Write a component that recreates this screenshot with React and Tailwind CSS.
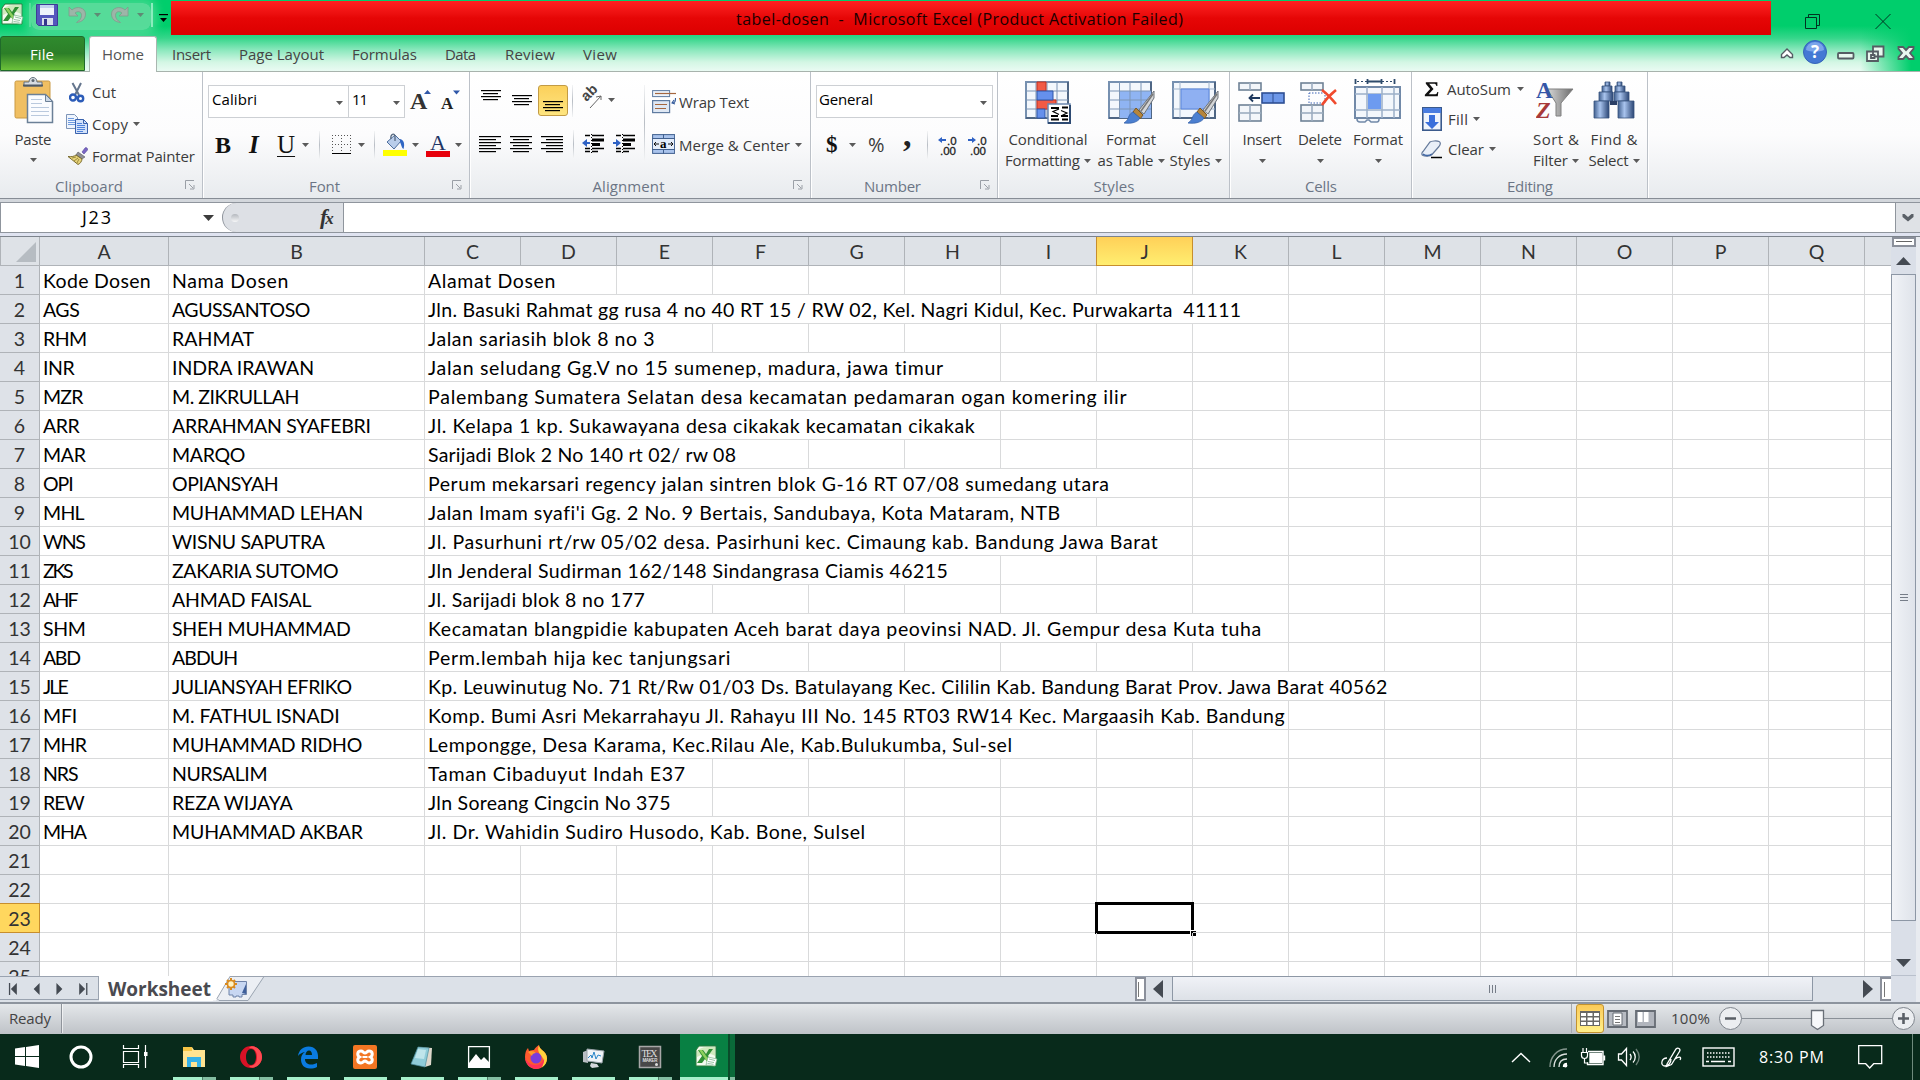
import React, { useLayoutEffect, useRef } from "react";

/* Single-line label whose tracking is adjusted so that it fills its width. */
function T({ w, children, className = "" }) {
  const ref = useRef(null);
  useLayoutEffect(() => {
    const el = ref.current;
    el.style.letterSpacing = "0px";
    const base = el.getBoundingClientRect().width;
    el.style.letterSpacing = (w - base) / Math.max(1, el.textContent.length - 1) + "px";
  }, [w, children]);
  return (
    <span className={"block shrink-0 whitespace-pre " + className} style={{ width: w }}>
      <span ref={ref}>{children}</span>
    </span>
  );
}

const Arrow = ({ className = "", fill = "#5a5a5a" }) => (
  <svg width="7" height="4" viewBox="0 0 7 4" className={"block shrink-0 " + className}>
    <path d="M0 0h7L3.5 4z" fill={fill} />
  </svg>
);

const Launcher = () => (
  <svg width="10" height="10" viewBox="0 0 10 10" className="block" fill="none" stroke="#9a9fa6">
    <path d="M.5 9V.5H9M4 4l4 4M9 5v4H5" />
  </svg>
);

const VSep = ({ className = "" }) => (
  <span className={"block w-px shrink-0 bg-linear-to-b from-[#f4f5f6] via-[#b9bec5] to-[#f4f5f6] " + className} />
);

function Group({ w, label, lw, launcher, children }) {
  return (
    <section className="flex h-[126px] shrink-0 border-r border-white" style={{ width: w }}>
      <div className="flex min-w-0 grow flex-col border-r border-[#bcc1c8]">
        <div className="h-[102px]">{children}</div>
        <div className="flex h-6 items-center text-[15px] text-[#6b7585]">
          <div className="flex grow justify-center pt-px">
            <T w={lw}>{label}</T>
          </div>
          {launcher && (
            <div className="w-[24px] shrink-0 pb-[2px] pl-[7px]">
              <Launcher />
            </div>
          )}
        </div>
      </div>
    </section>
  );
}

/* ---------- icons ---------- */

const ExcelIcon = () => (
  <svg width="23" height="23" viewBox="0 0 23 23" className="block shrink-0">
    <path d="M4 1h17v20H1V5z" fill="#f4faf0" stroke="#2b7a3b" />
    <path d="M2 6c5-5 10-4 18-4v9C14 7 8 9 2 12z" fill="#cfe9bd" />
    <path d="M3 5h5l3 4 3-5h4l-5 7 5 7h-5l-3-4-3 4H2l5-7z" fill="#2f8f35" />
    <path d="M4 5h3l9 13h-3z" fill="#8fd05e" />
    <path d="M13 12l9 2-2 7-9-1z" fill="#fff" stroke="#7bb389" strokeWidth=".7" />
    <path d="M14 14l6 1.500M13 16.500l6 1M12.500 18.500l6 .8" stroke="#7bb389" strokeWidth=".8" />
  </svg>
);

const SaveIcon = () => (
  <svg width="22" height="22" viewBox="0 0 22 22" className="block shrink-0">
    <path d="M.5 .5h21v21h-19l-2-2z" fill="#5557bd" stroke="#3c3c96" />
    <path d="M4 1h14v10H4z" fill="#eef2fb" />
    <path d="M4 1h14v3H4z" fill="#c3d2f0" />
    <path d="M6 14h11v7H6z" fill="#d9dfec" />
    <path d="M8 15h3v6H8z" fill="#35358c" />
  </svg>
);

const Undo = ({ flip = false }) => (
  <svg width="18" height="18" viewBox="0 0 18 18" className={"block shrink-0 " + (flip ? "-scale-x-100" : "")}>
    <path d="M1 1v9h9L7 7c3-2.500 6.500-1.500 6.500 2.500 0 3-2 5-5 7 5.500-.5 9-3.500 9-8.500C17.500 1.500 8.500-.5 4 4z" fill="#9db5a8" stroke="#7f9c8c" strokeWidth=".8" />
  </svg>
);

const PasteIcon = () => (
  <svg width="40" height="47" viewBox="0 0 40 47" className="block">
    <rect x="1" y="4" width="35" height="37" rx="1.500" fill="#f0bf62" stroke="#c99a45" />
    <path d="M10 9V5h5c0-6 8-6 8 0h5v4z" fill="#d7dce2" stroke="#66737f" />
    <path d="M9 8.500h20" stroke="#4e5a66" strokeWidth="2" />
    <circle cx="19" cy="3.500" r="1.500" fill="#5b6772" />
    <path d="M13.500 17.500h18l7 7v21h-25z" fill="#fafcff" stroke="#6b8097" strokeWidth="1.500" />
    <path d="M31.500 17.500v7h7z" fill="#ccd8e6" stroke="#6b8097" />
    <path d="M17 22.500h11M17 26.500h11M17 30.500h18M17 34.500h18M17 38.500h18" stroke="#b9c9de" />
  </svg>
);

const CutIcon = () => (
  <svg width="16" height="21" viewBox="0 0 16 21" className="block">
    <path d="M3.500 1l6.500 12M12 1L6 13" stroke="#64758d" strokeWidth="2" />
    <circle cx="4" cy="15.500" r="3" fill="none" stroke="#2c5cb8" strokeWidth="2.400" />
    <circle cx="11.500" cy="16.500" r="2.700" fill="none" stroke="#2c5cb8" strokeWidth="2.400" />
  </svg>
);

const CopyIcon = () => (
  <svg width="22" height="20" viewBox="0 0 22 20" className="block">
    <path d="M.5 .5h8l3 3v11H.5z" fill="#eef4fd" stroke="#7e95b8" />
    <path d="M2 4.500h6M2 6.500h7M2 8.500h7M2 10.500h7" stroke="#6e9ade" />
    <path d="M9.500 5.500h8l4 4v10h-12z" fill="#d3e2fa" stroke="#3a62ad" />
    <path d="M17.500 5.500v4h4" fill="none" stroke="#3a62ad" />
    <path d="M11 9.500h5M11 11.500h8M11 13.500h8M11 15.500h8M11 17.500h6" stroke="#4f82da" />
  </svg>
);

const BrushIcon = () => (
  <svg width="21" height="18" viewBox="0 0 21 18" className="block">
    <path d="M15 5l3-4c1-1 3 0 2.500 2L17 7z" fill="#7a65c4" stroke="#54469b" strokeWidth=".6" />
    <path d="M11 5l7 5-3 2-6-4z" fill="#8e8e93" stroke="#55555c" strokeWidth=".6" />
    <path d="M9 8l6 4c0 2-2 5-4 5.500L1 9.500C4 10 7 9.500 9 8z" fill="#e6d27a" stroke="#6f6121" strokeWidth=".9" />
    <path d="M5 11l4-1M7 14l4-3M10 16l2-4" stroke="#8a7a2c" strokeWidth=".8" />
  </svg>
);

const BordersIcon = () => (
  <svg width="19" height="20" viewBox="0 0 19 20" className="block">
    <path d="M0 .5h19M0 9.500h19M.5 0v18M9.500 0v18M18.500 0v18" stroke="#555" strokeDasharray="1 2" />
    <path d="M0 18.500h19" stroke="#000" />
  </svg>
);

const FillIcon = () => (
  <svg width="24" height="24" viewBox="0 0 24 24" className="block">
    <path d="M4 9l8-7 6 6-7 8z" fill="#b9cdea" stroke="#4d6e9e" />
    <path d="M8 6c-1-5 4-7 4-2v4" fill="none" stroke="#54677f" strokeWidth="1.300" />
    <path d="M17 6c4 1 5 5 3.500 10-2-1-2-4-3.500-7z" fill="#2f66c4" />
    <path d="M0 17h24v6H0z" fill="#ff0" />
  </svg>
);

const Lines = ({ h = 19, l, w = 22 }) => (
  <svg width={w} height={h} viewBox={`0 0 ${w} ${h}`} className="block shrink-0">
    {l.map(([x, len], i) => (
      <rect key={i} x={x} y={i * 3} width={len} height="1.200" fill="#000" />
    ))}
  </svg>
);

const AngleIcon = () => (
  <svg width="22" height="22" viewBox="0 0 22 22" className="block shrink-0 overflow-visible">
    <text x="0" y="0" transform="translate(5.500 15) rotate(-45)" fontFamily="Liberation Sans" fontSize="14.500" fontWeight="bold" fill="#444">
      ab
    </text>
    <path d="M9 21L20 9M20 9l-5 1M20 9v4" stroke="#666" fill="none" />
  </svg>
);

const IndentIcon = ({ right = false }) => (
  <svg width="22" height="20" viewBox="0 0 22 20" className="block shrink-0">
    <path d="M3 1.500h5M10 1.500h12M3 14.500h5M10 14.500h12M3 17.500h5M10 17.500h6" stroke="#000" strokeWidth="1.300" />
    <path d="M10 6h12M10 10.500h8" stroke="#000" strokeWidth="3" />
    <path d="M9.500 0v20" stroke="#000" strokeDasharray="1 2" />
    <path d={right ? "M8 9L3 5v3H0v2h3v3z" : "M0 9l5-4v3h3v2H5v3z"} fill="#2f62c4" />
  </svg>
);

const WrapIcon = () => (
  <svg width="24" height="24" viewBox="0 0 24 24" className="block shrink-0">
    <rect x=".6" y=".6" width="17" height="6" fill="#eef3fa" stroke="#5f7ba0" />
    <path d="M3 3.500h21" stroke="#a5673f" strokeWidth="1.200" />
    <rect x=".6" y="10.600" width="17" height="12" fill="#dfe8f4" stroke="#5f7ba0" strokeWidth="1.200" />
    <path d="M3 14.500h12M3 18.500h11" stroke="#a5673f" strokeWidth="1.200" />
    <path d="M23.500 8c0 4-1 5-3 5M22 10l-2 3 3 1" fill="none" stroke="#32599b" strokeWidth="1.100" />
  </svg>
);

const MergeIcon = () => (
  <svg width="23" height="20" viewBox="0 0 23 20" className="block shrink-0">
    <rect x=".6" y=".6" width="22" height="18.800" fill="#a9c3ec" stroke="#41608f" />
    <path d="M0 4.500h23M0 15.500h23M11.500 0v5M11.500 15v5" stroke="#41608f" />
    <rect x="1" y="5" width="21" height="10" fill="#e4edfa" />
    <path d="M2 10h5M21 10h-5M4 8l-2 2 2 2M19 8l2 2-2 2" stroke="#111" fill="none" />
    <text x="8" y="13.500" fontFamily="Liberation Serif" fontWeight="bold" fontSize="13">a</text>
  </svg>
);

const DecimalIcon = ({ right = false }) => (
  <svg width="20" height="21" viewBox="0 0 20 21" className="block shrink-0 overflow-visible">
    <path d={right ? "M8 5L4 2v2H0v2h4v2z" : "M0 5l4-3v2h4v2H4v2z"} fill="#2f62c4" />
    <text x="9" y="9.500" fontFamily="Liberation Sans" fontSize="11.500" fill="#222" stroke="#222" strokeWidth=".3">.0</text>
    <text x="2" y="19.500" fontFamily="Liberation Sans" fontSize="11.500" fill="#222" stroke="#222" strokeWidth=".3">.00</text>
  </svg>
);

const TableBase = () => (
  <>
    <rect x="1" y="1" width="42" height="36" fill="#f3f7fc" stroke="#7690b0" strokeWidth="2" />
    <path d="M1 37h42V1" fill="none" stroke="#4f6684" strokeWidth="2" />
  </>
);

const CondIcon = () => (
  <svg width="47" height="44" viewBox="0 0 47 44" className="block">
    <TableBase />
    <path d="M1 10h42M1 19h42M1 28h42M11 1v36M22 1v36M32 1v36" stroke="#7c95b5" />
    <path d="M12 1h9v9h-9zM12 19h19v9H12z" fill="#f25a45" stroke="#c03020" />
    <path d="M12 10h16v9H12zM12 28h8v9h-8z" fill="#6590ec" stroke="#2f56a8" />
    <rect x="23" y="23" width="22" height="19" fill="#fff" stroke="#6c88b0" strokeWidth="1.500" />
    <path d="M23 42h22V24" fill="none" stroke="#2d4a72" strokeWidth="2" />
    <path d="M26 27h8M26 35h7M26 38.500h8M37 26.500h6M36 35h7M37 38.500h6" stroke="#000" strokeWidth="1.800" />
    <path d="M34 28l-6 2.500 6 3M36 29.500l6 2.500-6 3" fill="none" stroke="#000" strokeWidth="1.200" />
  </svg>
);

const Brush = () => (
  <>
    <path d="M46 10v7L36 33l-5-4z" fill="#d4d6d8" stroke="#6e747b" />
    <path d="M45 13L33 30" stroke="#777" strokeWidth="1.500" />
    <path d="M28 27l7 7-3 4-7-7z" fill="#b5853c" stroke="#7b5720" />
    <path d="M25 31l7 6c-2 4-8 6-16 5 3-2 4-4 5-7 1-2 2-3 4-4z" fill="#4b7fd0" stroke="#2f5ca5" strokeWidth=".7" />
  </>
);

const FormatTableIcon = () => (
  <svg width="47" height="44" viewBox="0 0 47 44" className="block">
    <TableBase />
    <path d="M12 10h31v27H12z" fill="#8fb4f3" />
    <path d="M1 10h42M1 19h42M1 28h42M11.500 1v36M22 1v36M33 1v36" stroke="#7c95b5" />
    <Brush />
  </svg>
);

const CellStylesIcon = () => (
  <svg width="47" height="44" viewBox="0 0 47 44" className="block">
    <TableBase />
    <path d="M1 8h42M1 28h42M8 1v36M37 1v36" stroke="#9fb3cb" />
    <path d="M9 8h28v20H9z" fill="#8fb0f2" stroke="#5a86dc" />
    <Brush />
  </svg>
);

const RowBlock = ({ y, h }) => (
  <g fill="#f3f6fa" stroke="#6f8296" strokeWidth="1.600">
    <rect x="1" y={y} width="22" height={h} />
    <path d={`M12 ${y}v${h}`} stroke="#9cadc0" />
    {h > 10 && <path d={`M1 ${y + 8}h22`} stroke="#9cadc0" />}
  </g>
);

const InsertIcon = () => (
  <svg width="48" height="44" viewBox="0 0 48 44" className="block">
    <RowBlock y={4} h={7} />
    <RowBlock y={26} h={16} />
    <rect x="24" y="14" width="22" height="10" fill="#6d97e8" stroke="#2e4f93" strokeWidth="1.600" />
    <path d="M35 14v10" stroke="#2e4f93" />
    <path d="M12 19h10M15 15.500L11.500 19l3.500 3.500" fill="none" stroke="#1f3a5f" strokeWidth="1.800" />
  </svg>
);

const DeleteIcon = () => (
  <svg width="40" height="44" viewBox="0 0 40 44" className="block">
    <RowBlock y={4} h={7} />
    <RowBlock y={26} h={16} />
    <rect x="9" y="14" width="16" height="10" fill="none" stroke="#3b62b5" strokeDasharray="1.500 1.500" />
    <path d="M22 11c4 3 9 8 14 14M36 11c-5 4-10 9-14 15" fill="none" stroke="#f04a2e" strokeWidth="2.600" />
  </svg>
);

const FormatIcon = () => (
  <svg width="48" height="44" viewBox="0 0 48 44" className="block">
    <path d="M1.500 0v5M13.500 0v5M27.500 0v5M40.500 0v5M14 2.500h13" stroke="#2d4a6b" strokeWidth="1.800" />
    <path d="M3 2.500h10M28 2.500h12" stroke="#2d4a6b" strokeDasharray="2 2" />
    <rect x="1" y="8" width="45" height="31" fill="#f3f7fc" stroke="#7189a8" strokeWidth="2" />
    <path d="M1 15h45M1 31h45M13 8v31M28 8v31M40 8v31" stroke="#9cb0c8" strokeWidth="1.500" />
    <path d="M14 15h13v15H14z" fill="#6d9bf0" />
    <path d="M3 40c0 2 1 3 3 3h5l2-2h2l2 2h6c1 0 2-1 2-3" stroke="#7189a8" strokeWidth="1.500" fill="#f3f7fc" />
  </svg>
);

const SortIcon = () => (
  <svg width="40" height="40" viewBox="0 0 40 40" className="block">
    <defs>
      <linearGradient id="funnel">
        <stop offset="0" stopColor="#d9d9d9" />
        <stop offset="1" stopColor="#6c6c6c" />
      </linearGradient>
    </defs>
    <path d="M11 8h26L25 22v13h-5V22z" fill="url(#funnel)" stroke="#808080" />
    <text x="0" y="17" fontFamily="Liberation Serif" fontWeight="bold" fontSize="23" fill="#3557a8">A</text>
    <text x="0" y="37" fontFamily="Liberation Serif" fontWeight="bold" fontStyle="italic" fontSize="24" fill="#a83a3a">Z</text>
  </svg>
);

const FindIcon = () => (
  <svg width="43" height="40" viewBox="0 0 43 40" className="block">
    <defs>
      <linearGradient id="lens">
        <stop offset="0" stopColor="#41608f" />
        <stop offset=".4" stopColor="#a9c4ee" />
        <stop offset="1" stopColor="#2b4675" />
      </linearGradient>
    </defs>
    <g fill="url(#lens)" stroke="#38547f" strokeWidth=".8">
      <path d="M12 1h5v4h-5z" />
      <path d="M24 1h5v4h-5z" />
      <path d="M9 5h10v6H9z" />
      <path d="M22 5h10v6H22z" />
      <path d="M6 11h14v9H6z" />
      <path d="M21 11h15v9H21z" />
      <path d="M1 20h15v17H1z" />
      <path d="M25 20h16v17H25z" />
    </g>
    <path d="M17 20h7v4h-7z" fill="#2b3f66" />
  </svg>
);

const FillDownIcon = () => (
  <svg width="20" height="24" viewBox="0 0 20 24" className="block">
    <rect x=".8" y=".8" width="18.400" height="22.400" fill="#f0f5fc" stroke="#3b5a8c" strokeWidth="1.600" />
    <path d="M1 1h18v5H1z" fill="#4a7de0" />
    <path d="M7 8h6v7h4l-7 7-7-7h4z" fill="#3a6fdb" />
  </svg>
);

const EraserIcon = () => (
  <svg width="21" height="19" viewBox="0 0 21 19" className="block">
    <path d="M9 2c1-1 7-1.500 9-.5s1.500 3 0 5l-7 8c-2 2-7 2-9 1s-1-3 0-4z" fill="#e9eff8" stroke="#64799a" strokeWidth="1.200" />
    <path d="M11 14c-3 2-7 2-9 0" stroke="#3f66a5" fill="none" strokeWidth="1.500" />
    <path d="M10 17.500h11" stroke="#000" strokeWidth="1.500" />
  </svg>
);

/* ---------- title bar and tabs ---------- */

const TABS = [
  ["Insert", 39, 15],
  ["Page Layout", 85, 28],
  ["Formulas", 65, 28],
  ["Data", 31, 28],
  ["Review", 50, 29],
  ["View", 34, 28],
];

function TitleBar() {
  return (
    <div className="flex h-9">
      <div className="flex h-[34px] w-[171px] items-start pt-[3px] pl-px">
        <ExcelIcon />
        <div className="ml-[5px] h-6 w-[2px] bg-[#4bdf98]" />
        <div className="flex h-[27px] items-center rounded-lg bg-[#5fdd9f]/90 pb-1 pl-[5px] shadow-[0_0_8px_6px_rgba(95,221,159,.6)]">
          <SaveIcon />
          <div className="ml-[10px]">
            <Undo />
          </div>
          <Arrow className="ml-[8px]" fill="#5f8a74" />
          <div className="ml-[10px]">
            <Undo flip />
          </div>
          <Arrow className="mr-[7px] ml-[8px]" fill="#5f8a74" />
        </div>
        <div className="h-6 w-[2px] shrink-0 bg-[#8aecbd]" />
        <svg width="9" height="9" viewBox="0 0 9 9" className="mt-[11px] ml-[6px] block shrink-0">
          <path d="M0 .6h9" stroke="#000" strokeWidth="1.200" />
          <path d="M1 4h7L4.500 8z" />
        </svg>
      </div>
      <div className="mt-px flex h-[34px] w-[1600px] justify-center bg-linear-to-b from-[#ff2020] via-[#e60606] via-50% to-[#dc0000] pt-[8px] pr-[23px] text-[16px] leading-5 text-[#1a0000]">
        <T w={447}>{"tabel-dosen  -  Microsoft Excel (Product Activation Failed)"}</T>
      </div>
      <svg width="90" height="16" viewBox="0 0 90 16" className="mt-3.5 ml-[34px] block" fill="none" stroke="#032">
        <path d="M.5 3.500h11v11H.5zM3.500 3.500v-3h11v11h-3M70.500 0l15 15M85.500 0l-15 15" />
      </svg>
    </div>
  );
}

function TabStrip() {
  return (
    <div className="flex h-[35px] items-stretch text-[15px] text-[#444]">
      <div className="flex w-[85px] items-center rounded-t-[3px] border border-[#1f6a2a] bg-linear-to-b from-[#2f8a2e] via-[#2c7f28] to-[#6cc23a] pt-px pl-[29px] text-white">
        <T w={24}>File</T>
      </div>
      <div className="ml-1 flex h-9 w-[68px] items-center rounded-t-[3px] border border-b-0 border-[#a9b7b0] bg-white pl-3 text-[#555]">
        <T w={42}>Home</T>
      </div>
      {TABS.map(([label, w, gap]) => (
        <div key={label} className="flex items-center pt-px" style={{ marginLeft: gap }}>
          <T w={w}>{label}</T>
        </div>
      ))}
      <div className="ml-auto flex items-center pt-px pr-[5px]">
        <svg width="14" height="12" viewBox="0 0 14 12" className="block" fill="#fff" stroke="#555c63" strokeWidth="1.400">
          <path d="M7 1l5.500 5.500v3H10L7 7l-3 2.500H1.500v-3z" />
        </svg>
        <svg width="24" height="24" viewBox="0 0 24 24" className="mb-1 ml-[9px] block">
          <circle cx="12" cy="12" r="11.500" fill="#4478d4" stroke="#3564b8" />
          <path d="M3 10a9 8 0 0 1 18 0c-5 2-13 2-18 0z" fill="#7ba4ea" />
          <text x="12" y="18" textAnchor="middle" fontFamily="Open Sans" fontWeight="bold" fontSize="17" fill="#fff">?</text>
        </svg>
        <svg width="78" height="18" viewBox="0 0 78 18" className="mb-px ml-[10px] block" fill="#e8f8ef" stroke="#555c63" strokeWidth="1.800">
          <rect x="1" y="8" width="15.500" height="5.500" rx="1" />
          <path d="M36 1.500h10.500v10H36zM30 6.500h11v9.500H30z" />
          <path d="M34 10h3.500v3H34z" />
          <path d="M61.500 2h4.500l3 3.200L72 2h4.500v1.800L73 8l3.500 4.200V14H72l-3-3.200L66 14h-4.500v-1.800L65 8l-3.500-4.200z" />
        </svg>
      </div>
    </div>
  );
}

/* ---------- ribbon ---------- */

function Big({ w, ml = 0, icon, l1, w1, l2, w2, pt = 9 }) {
  return (
    <div className="flex shrink-0 flex-col items-center" style={{ width: w, marginLeft: ml }}>
      <div className="h-[57px]" style={{ paddingTop: pt }}>{icon}</div>
      <div className="leading-[21px]">
        <T w={w1}>{l1}</T>
      </div>
      <div className="flex h-[21px] items-center gap-1 leading-[21px]">
        {l2 && <T w={w2}>{l2}</T>}
        <Arrow />
      </div>
    </div>
  );
}

const C3 = [[1, 20], [3, 15], [1, 20], [3, 15]];

function Ribbon() {
  return (
    <div className="flex h-[126px] bg-linear-to-b from-white via-[#fcfcfd] via-50% to-[#e8ebee] text-[15px] text-[#3b3b3b]">
      <Group w={204} label="Clipboard" lw={68} launcher>
        <div className="flex">
          <div className="flex w-[66px] flex-col items-center pt-[5px]">
            <div className="h-[52px] pl-0.5"><PasteIcon /></div>
            <div className="leading-[21px]"><T w={37}>Paste</T></div>
            <Arrow className="mt-[8px]" />
          </div>
          <div className="flex flex-col pt-[4px]">
            <div className="flex h-8 items-center">
              <div className="w-[26px] pl-[3px]"><CutIcon /></div>
              <T w={24}>Cut</T>
            </div>
            <div className="flex h-8 items-center">
              <div className="w-[26px]"><CopyIcon /></div>
              <T w={36}>Copy</T>
              <Arrow className="ml-[5px]" />
            </div>
            <div className="flex h-8 items-center">
              <div className="w-[26px] pl-px"><BrushIcon /></div>
              <T w={103}>Format Painter</T>
            </div>
          </div>
        </div>
      </Group>

      <Group w={267} label="Font" lw={31} launcher>
        <div className="flex pt-[13px] pl-1">
          <div className="flex h-[33px] w-[141px] items-center border border-[#cdd0d4] bg-white pr-[5px] pl-[3px] text-black">
            <T w={45} className="mb-1">Calibri</T>
            <Arrow className="mt-0.5 ml-auto" />
          </div>
          <div className="-ml-px flex h-[33px] w-[57px] items-center border border-[#cdd0d4] bg-white pr-1 pl-[3px] text-black">
            <T w={16} className="mb-1">11</T>
            <Arrow className="mt-0.5 ml-auto" />
          </div>
          <svg width="56" height="28" viewBox="0 0 56 28" className="mt-1 ml-1 block">
            <text x="1" y="20" fontFamily="Liberation Serif" fontWeight="bold" fontSize="24" fill="#333">A</text>
            <path d="M15 5h7l-3.500-4z" fill="#2f57a8" />
            <text x="32" y="20" fontFamily="Liberation Serif" fontWeight="bold" fontSize="17" fill="#222">A</text>
            <path d="M44 1.500h7l-3.500 4z" fill="#2f57a8" />
          </svg>
        </div>
        <div className="flex h-[54px] items-center pl-[11px] font-['Liberation_Serif'] text-[25px] leading-7 text-[#111]">
          <span className="w-[34px] text-[24px] font-bold">B</span>
          <span className="w-7 font-bold italic">I</span>
          <span className="w-[25px] underline decoration-1 underline-offset-[3px]">U</span>
          <Arrow />
          <VSep className="ml-2.5 h-7" />
          <div className="ml-3"><BordersIcon /></div>
          <Arrow className="ml-[7px]" />
          <VSep className="ml-[9px] h-7" />
          <div className="ml-2"><FillIcon /></div>
          <Arrow className="ml-[5px]" />
          <div className="ml-[7px] flex w-6 flex-col items-center">
            <span className="h-[17px] text-[22px] leading-[17px] text-[#1f3566]">A</span>
            <span className="h-[6px] w-6 bg-red-600" />
          </div>
          <Arrow className="ml-[5px]" />
        </div>
      </Group>

      <Group w={341} label="Alignment" lw={72} launcher>
        <div className="flex">
          <div className="flex w-[173px] flex-col pt-[13px]">
            <div className="flex h-[31px] items-start">
              <div className="mt-[5px] ml-[9px]"><Lines l={C3} h={12} /></div>
              <div className="mt-[10px] ml-[9px]"><Lines l={C3} h={12} /></div>
              <div className="ml-[5px] h-[31px] w-[30px] rounded-[3px] border border-[#c29b45] bg-linear-to-b from-[#fbd05b] to-[#fee57f] pt-[15px] pl-[3px]"><Lines l={C3} h={12} /></div>
              <VSep className="ml-1 h-8" />
              <div className="mt-0.5 ml-2"><AngleIcon /></div>
              <Arrow className="mt-[13px] ml-[5px]" />
            </div>
            <div className="flex h-[56px] items-center">
              <div className="ml-[8px]"><Lines l={[[0, 22], [0, 17], [0, 22], [0, 17], [0, 22], [0, 17]]} h={17} /></div>
              <div className="ml-[9px]"><Lines l={[[0, 22], [3, 16], [0, 22], [3, 16], [0, 22], [3, 16]]} h={17} /></div>
              <div className="ml-[9px]"><Lines l={[[0, 22], [5, 17], [0, 22], [5, 17], [0, 22], [5, 17]]} h={17} /></div>
              <VSep className="ml-[10px] h-7" />
              <div className="ml-[8px]"><IndentIcon /></div>
              <div className="ml-[9px]"><IndentIcon right /></div>
            </div>
          </div>
          <VSep className="mt-[13px] h-[76px]" />
          <div className="flex flex-col pt-[12px] pl-[7px]">
            <div className="flex h-[36px] items-center gap-[3px]">
              <WrapIcon />
              <T w={70}>Wrap Text</T>
            </div>
            <div className="mt-[7px] flex h-[36px] items-center">
              <div className="mb-0.5"><MergeIcon /></div>
              <T w={111} className="ml-[4px]">Merge &amp; Center</T>
              <Arrow className="ml-[5px]" />
            </div>
          </div>
        </div>
      </Group>

      <Group w={187} label="Number" lw={57} launcher>
        <div className="pt-[13px] pl-[4px]">
          <div className="flex h-[33px] w-[177px] items-center border border-[#cdd0d4] bg-white pr-[5px] pl-[2px] text-black">
            <T w={54} className="mb-1">General</T>
            <Arrow className="mt-0.5 ml-auto" />
          </div>
          <div className="flex h-[54px] items-center">
            <span className="ml-[10px] w-[23px] font-['Liberation_Serif'] text-[23px] font-bold text-[#111]">$</span>
            <Arrow />
            <span className="ml-[12px] w-[35px] shrink-0 text-[20px]">%</span>
            <span className="w-[24px] shrink-0 font-['Liberation_Serif'] text-[34px] leading-[10px] font-bold text-[#222]">
              <span className="relative -top-[10px]">,</span>
            </span>
            <VSep className="h-7" />
            <div className="ml-2.5"><DecimalIcon /></div>
            <div className="ml-2.5"><DecimalIcon right /></div>
          </div>
        </div>
      </Group>

      <Group w={232} label="Styles" lw={41}>
        <div className="flex">
          <Big w={94} ml={2} icon={<CondIcon />} l1="Conditional" w1={79} l2="Formatting" w2={75} />
          <Big w={68} ml={2} icon={<FormatTableIcon />} l1="Format" w1={50} l2="as Table" w2={56} />
          <Big w={53} ml={4} icon={<CellStylesIcon />} l1="Cell" w1={26} l2="Styles" w2={41} />
        </div>
      </Group>

      <Group w={182} label="Cells" lw={32}>
        <div className="flex">
          <Big w={48} ml={7} pt={7} icon={<InsertIcon />} l1="Insert" w1={39} />
          <Big w={44} ml={12} pt={7} icon={<DeleteIcon />} l1="Delete" w1={44} />
          <Big w={50} ml={11} pt={7} icon={<FormatIcon />} l1="Format" w1={50} />
        </div>
      </Group>

      <Group w={236} label="Editing" lw={46}>
        <div className="flex">
          <div className="flex w-[111px] flex-col pt-[2px] pl-[8px]">
            <div className="flex h-[30px] items-center">
              <svg width="27" height="16" viewBox="0 0 27 16" className="block">
                <path d="M5 1h12v4h-1c-.5-2-1-2.500-3-2.500H8.500L13 8l-5 5.500h5.500c2 0 3-.5 3.500-2.500h1l-.6 4.500H4V14l5.500-6L5 2.500z" fill="#111" />
              </svg>
              <T w={64}>AutoSum</T>
              <Arrow className="ml-[6px]" />
            </div>
            <div className="flex h-[30px] items-center">
              <div className="w-[27px] pl-px"><FillDownIcon /></div>
              <T w={20}>Fill</T>
              <Arrow className="ml-[5px]" />
            </div>
            <div className="flex h-[30px] items-center">
              <div className="w-[27px]"><EraserIcon /></div>
              <T w={36}>Clear</T>
              <Arrow className="ml-[5px]" />
            </div>
          </div>
          <Big w={56} ml={4} icon={<SortIcon />} l1="Sort &amp;" w1={46} l2="Filter" w2={35} />
          <Big w={56} ml={2} icon={<FindIcon />} l1="Find &amp;" w1={47} l2="Select" w2={40} />
        </div>
      </Group>
    </div>
  );
}

/* ---------- sheet ---------- */

const COLS = "DEFGHIJKLMNOPQ".split("");

const ROWS = [
  ["Kode Dosen", 88, "Nama Dosen", 95, "Alamat Dosen", 104, 2],
  ["AGS", 30, "AGUSSANTOSO", 113, "Jln. Basuki Rahmat gg rusa 4 no 40 RT 15 / RW 02, Kel. Nagri Kidul, Kec. Purwakarta  41111", 664, 9],
  ["RHM", 36, "RAHMAT", 67, "Jalan sariasih blok 8 no 3", 185, 3],
  ["INR", 26, "INDRA IRAWAN", 116, "Jalan seludang Gg.V no 15 sumenep, madura, jawa timur", 421, 6],
  ["MZR", 33, "M. ZIKRULLAH", 104, "Palembang Sumatera Selatan desa kecamatan pedamaran ogan komering ilir", 570.5, 8],
  ["ARR", 30, "ARRAHMAN SYAFEBRI", 162.5, "Jl. Kelapa 1 kp. Sukawayana desa cikakak kecamatan cikakak", 446.5, 6],
  ["MAR", 35, "MARQO", 60, "Sarijadi Blok 2 No 140 rt 02/ rw 08", 251.5, 4],
  ["OPI", 25, "OPIANSYAH", 87, "Perum mekarsari regency jalan sintren blok G-16 RT 07/08 sumedang utara", 556, 8],
  ["MHL", 34, "MUHAMMAD LEHAN", 156, "Jalan Imam syafi'i Gg. 2 No. 9 Bertais, Sandubaya, Kota Mataram, NTB", 516, 7],
  ["WNS", 35, "WISNU SAPUTRA", 125, "Jl. Pasurhuni rt/rw 05/02 desa. Pasirhuni kec. Cimaung kab. Bandung Jawa Barat", 596, 8],
  ["ZKS", 25, "ZAKARIA SUTOMO", 136, "Jln Jenderal Sudirman 162/148 Sindangrasa Ciamis 46215", 424.5, 6],
  ["AHF", 29, "AHMAD FAISAL", 114, "Jl. Sarijadi blok 8 no 177", 177, 3],
  ["SHM", 35, "SHEH MUHAMMAD", 146, "Kecamatan blangpidie kabupaten Aceh barat daya peovinsi NAD. Jl. Gempur desa Kuta tuha", 680.5, 9],
  ["ABD", 31, "ABDUH", 54, "Perm.lembah hija kec tanjungsari", 247, 4],
  ["JLE", 21, "JULIANSYAH EFRIKO", 147, "Kp. Leuwinutug No. 71 Rt/Rw 01/03 Ds. Batulayang Kec. Cililin Kab. Bandung Barat Prov. Jawa Barat 40562", 783.5, 11],
  ["MFI", 28, "M. FATHUL ISNADI", 137, "Komp. Bumi Asri Mekarrahayu Jl. Rahayu III No. 145 RT03 RW14 Kec. Margaasih Kab. Bandung", 699.5, 9],
  ["MHR", 36, "MUHAMMAD RIDHO", 155.5, "Lempongge, Desa Karama, Kec.Rilau Ale, Kab.Bulukumba, Sul-sel", 477, 7],
  ["NRS", 29, "NURSALIM", 78, "Taman Cibaduyut Indah E37", 210, 3],
  ["REW", 34, "REZA WIJAYA", 98.5, "Jln Soreang Cingcin No 375", 198, 3],
  ["MHA", 36, "MUHAMMAD AKBAR", 156, "Jl. Dr. Wahidin Sudiro Husodo, Kab. Bone, Sulsel", 357, 5],
];

/* Text widths in ROWS are stored in sheet units; one unit is 1.2245 px. */
const U = 1.2245;

function SheetRow({ n }) {
  const r = ROWS[n - 1];
  const span = r ? r[6] : 1;
  const cell = "h-[29px] shrink-0 border-r border-b border-[#d9dadb]";
  return (
    <div className="flex h-[29px] shrink-0">
      <div
        className={
          "h-[29px] w-10 shrink-0 border-r border-b text-center text-[19.5px] leading-[30px] text-[#333] " +
          (n === 23 ? "border-[#c78e2d] bg-[#ffd75e] shadow-[0_-1px_0_#c78e2d]" : "border-[#afb3b8] bg-[#dee2e8]")
        }
      >
        {n}
      </div>
      <div className={cell + " w-[129px] pl-[3px] leading-[30px]"}>{r && <T w={r[1] * U}>{r[0]}</T>}</div>
      <div className={cell + " w-[256px] pl-[3px] leading-[30px]"}>{r && <T w={r[3] * U}>{r[2]}</T>}</div>
      <div className={cell + " pl-[3px] leading-[30px]"} style={{ width: span * 96 }}>
        {r && <T w={r[5] * U}>{r[4]}</T>}
      </div>
      {COLS.slice(span - 1).map((c) => (
        <div key={c} className={cell + " relative w-24"}>
          {n === 23 && c === "J" && (
            <div className="absolute -top-[2px] -left-[2px] h-[32px] w-[99px] border-[3px] border-black">
              <div className="absolute -right-[5px] -bottom-[5px] h-[6px] w-[6px] border-t border-l border-white bg-black" />
            </div>
          )}
        </div>
      ))}
      <div className="h-[29px] grow border-b border-[#d9dadb]" />
    </div>
  );
}

function Sheet() {
  const head = "h-[29px] shrink-0 border-r border-b border-[#afb3b8] text-center leading-[29px] text-[19.5px] text-[#333]";
  return (
    <div className="flex h-[739px] w-[1891px] flex-col overflow-hidden bg-white font-['Lato',sans-serif] text-[19.5px] text-black">
      <div className="flex h-[29px] shrink-0 bg-[#dee2e7]">
        <div className="flex h-[29px] w-10 shrink-0 items-end justify-end border-r border-b border-l border-[#afb3b8] pr-[3px] pb-[3px]">
          <svg width="20" height="20" viewBox="0 0 20 20" className="block">
            <path d="M20 0v20H0z" fill="#b6bcc2" />
          </svg>
        </div>
        <div className={head + " w-[129px]"}>A</div>
        <div className={head + " w-[256px]"}>B</div>
        {["C", ...COLS].map((c) => (
          <div
            key={c}
            className={
              c === "J"
                ? "h-[29px] w-24 shrink-0 border-r border-b border-[#c78e2d] bg-linear-to-b from-[#ffd058] to-[#ffee70] text-center text-[19.5px] leading-[29px] text-[#333] shadow-[-1px_0_0_#c78e2d]"
                : head + " w-24"
            }
          >
            {c}
          </div>
        ))}
        <div className="h-[29px] grow border-b border-[#afb3b8]" />
      </div>
      {Array.from({ length: 25 }, (_, i) => (
        <SheetRow key={i} n={i + 1} />
      ))}
    </div>
  );
}

function VScroll() {
  return (
    <div className="flex h-[765px] w-[29px] flex-col items-center border-r-4 border-[#e8ebf0] bg-[#dadfe8]">
      <div className="h-[10px] w-[24px] border-2 border-[#8b909b] bg-white pt-0.5">
        <div className="mx-auto h-px w-4 bg-[#666]" />
      </div>
      <svg width="15" height="8" viewBox="0 0 15 8" className="mt-[10px] block">
        <path d="M7.500 0L15 8H0z" fill="#444a52" />
      </svg>
      <div className="mt-[9px] flex h-[647px] w-[25px] flex-col items-center justify-center gap-[2px] border border-[#8d97a5] bg-linear-to-r from-[#f1f3f7] to-[#dfe3ea]">
        <div className="h-px w-2 bg-[#767d88]" />
        <div className="h-px w-2 bg-[#767d88]" />
        <div className="h-px w-2 bg-[#767d88]" />
      </div>
      <svg width="15" height="8" viewBox="0 0 15 8" className="mt-[38px] block">
        <path d="M7.500 8L15 0H0z" fill="#444a52" />
      </svg>
      <div className="mt-2 h-px w-full bg-[#b9c0cc]" />
    </div>
  );
}

function SheetTabs() {
  return (
    <div className="flex h-[26px] w-[1891px] bg-[#dce1e8] shadow-[inset_0_1px_0_#9aa3b0]">
      <div className="flex h-[24px] w-[99px] items-center border-r border-b border-[#9aa3b0] pt-0.5">
        <svg width="99" height="14" viewBox="0 0 99 14" className="block" fill="#444a52">
          <path d="M9 1h1.300v12H9zM17 1v12l-6-6zM40 1v12l-6-6zM57 1v12l6-6zM80 1v12l6-6zM87 1h1.300v12H87z" />
        </svg>
      </div>
      <div className="flex h-[25px] w-[114px] items-center bg-white pl-[9px] text-[19px] leading-[24px] font-bold text-[#4a4a50]">
        <T w={103}>Worksheet</T>
      </div>
      <svg width="60" height="26" viewBox="0 0 60 26" className="block shrink-0">
        <path d="M0 0h17L3 24.500H0z" fill="#fff" />
        <path d="M17 .5L4 22.500l2 2h29L51 .5z" fill="#eceff4" stroke="#9aa3b0" />
        <path d="M16 5.500h17.500v13H29v2.500h-3v-1h-3v1h-3v-2h-4z" fill="#c8d7f2" stroke="#6f83a8" />
        <path d="M29 17l4-9v10z" fill="#3f5f9a" />
        <circle cx="18" cy="8" r="3.500" fill="#fff3c4" stroke="#d98a1e" strokeWidth="1.600" />
        <path d="M18 2v2M18 12v2M12 8h2M22 8h2M14 4l1.500 1.500M22 4l-1.500 1.500M14 12l1.500-1.500M22 12l-1.500-1.500" stroke="#d98a1e" strokeWidth="2" />
      </svg>
      <div className="ml-auto flex h-[25px] items-center">
        <div className="h-[24px] w-[11px] border-2 border-[#8b909b] bg-white pt-[3px] pl-px">
          <div className="h-[15px] w-px bg-[#777]" />
        </div>
        <svg width="10" height="18" viewBox="0 0 10 18" className="ml-[7px] block">
          <path d="M10 0v18L0 9z" fill="#444a52" />
        </svg>
        <div className="ml-[9px] flex h-[25px] w-[641px] items-center justify-center gap-[2px] border border-[#8d97a5] bg-linear-to-b from-[#f0f2f7] to-[#dde1e7]">
          <div className="h-2 w-px bg-[#767d88]" />
          <div className="h-2 w-px bg-[#767d88]" />
          <div className="h-2 w-px bg-[#767d88]" />
        </div>
        <svg width="10" height="18" viewBox="0 0 10 18" className="ml-[50px] block">
          <path d="M0 0v18l10-9z" fill="#444a52" />
        </svg>
        <div className="ml-[7px] h-[24px] w-[11px] border-2 border-r-0 border-[#8b909b] bg-white pt-[3px] pl-0.5">
          <div className="h-[15px] w-px bg-[#777]" />
        </div>
      </div>
    </div>
  );
}

function FormulaBar() {
  return (
    <div className="flex h-[31px] border-t border-b border-[#8f959d] bg-white">
      <div className="flex w-[222px] items-center border-l border-[#8f959d]">
        <T w={29} className="ml-[81px] text-[18px] text-black">J23</T>
        <svg width="11" height="6" viewBox="0 0 11 6" className="ml-[92px] block">
          <path d="M0 0h11L5.500 6z" fill="#3c3c3c" />
        </svg>
      </div>
      <div className="flex w-[122px] items-center rounded-l-full border-r border-l border-[#8f959d] bg-[#dde0e5] pl-2">
        <div className="h-2 w-2 rounded-full bg-linear-to-b from-[#b4b8be] to-[#f6f7f8]" />
        <span className="ml-[81px] font-['Liberation_Serif'] text-[22px] leading-6 font-bold text-[#333] italic">
          f<span className="-ml-0.5 text-[17px]">x</span>
        </span>
      </div>
      <div className="grow" />
      <div className="flex w-[25px] items-center justify-center border-l border-[#8f959d] bg-[#dfe2e6]">
        <svg width="12" height="9" viewBox="0 0 12 9" className="block">
          <path d="M.5 1v3L6 8.500 11.500 4V1h-2L6 4 2.500 1z" fill="#5a6067" />
        </svg>
      </div>
    </div>
  );
}

function StatusBar() {
  return (
    <div className="flex h-[32px] items-center border-t-2 border-[#8d949e] bg-linear-to-b from-[#e4e7ea] to-[#bfc3c8] pb-px text-[15px] text-[#444]">
      <T w={42} className="ml-[9px]">Ready</T>
      <div className="ml-[10px] h-full w-px bg-[#8f949b]" />
      <div className="h-full w-px bg-white/60" />
      <div className="ml-auto h-full w-px bg-[#a5a9af]" />
      <div className="ml-[4px] flex h-[29px] w-[28px] items-center justify-center rounded-[3px] border border-[#c2922f] bg-linear-to-b from-[#fbca58] to-[#fff08a]">
        <svg width="20" height="15" viewBox="0 0 20 15" className="block">
          <path d="M0 0h20v15H0z" fill="#666" />
          <path d="M1 2h5v3H1zM7.500 2h5v3h-5zM14 2h5v3h-5zM1 6.500h5v3H1zM7.500 6.500h5v3h-5zM14 6.500h5v3h-5zM1 11h5v3H1zM7.500 11h5v3h-5zM14 11h5v3h-5z" fill="#fff" />
        </svg>
      </div>
      <svg width="50" height="18" viewBox="0 0 50 18" className="ml-[3px] block">
        <path d="M1 1h19v16H1z" fill="#b7bbc2" stroke="#666c74" strokeWidth="1.800" />
        <path d="M6 3h9v12H6z" fill="#fff" stroke="#666c74" />
        <path d="M8 6.500h5M8 9.500h5M8 12.500h5" stroke="#777" />
        <path d="M29 1h19v16H29z" fill="#b1b5bd" stroke="#666c74" strokeWidth="1.800" />
        <path d="M31 2h4.500v10H31zM37 2h4.500v10H37z" fill="#fff" />
      </svg>
      <T w={39} className="ml-[14px]">100%</T>
      <svg width="197" height="26" viewBox="0 0 197 26" className="mr-[5px] ml-[8px] block">
        <path d="M23 12.500h152" stroke="#8a9097" />
        <path d="M93.500 4.500h12v15l-6 4-6-4z" fill="#f7f8fa" stroke="#6a7078" strokeWidth="1.300" />
        <circle cx="12.500" cy="12.500" r="11" fill="#eceef1" stroke="#7f858d" />
        <circle cx="185.500" cy="12.500" r="11" fill="#eceef1" stroke="#7f858d" />
        <path d="M7 12.500h11M180 12.500h11M185.500 7v11" stroke="#5a5f66" strokeWidth="2.600" />
      </svg>
    </div>
  );
}

/* ---------- taskbar ---------- */

const APPS = {
  explorer: (
    <svg width="24" height="24" viewBox="0 0 24 24">
      <path d="M1 2h9l2 3h11v17H1z" fill="#ffe391" />
      <path d="M1 2h9v4H1z" fill="#f6c445" />
      <path d="M5 22V12h14v10h-4v-5H9v5z" fill="#35b1e8" />
    </svg>
  ),
  opera: (
    <svg width="24" height="24" viewBox="0 0 24 24">
      <path fillRule="evenodd" d="M12 1a11 11 0 1 0 0 22 11 11 0 1 0 0-22zm0 3c3 0 5 3.500 5 8s-2 8-5 8-5-3.500-5-8 2-8 5-8z" fill="#d81226" />
      <path d="M15 1.500c5 1.500 8 5.500 8 10.500s-3 9-8 10.500c-2 .5-4 0-5-1.500 6 0 8-4 8-9s-2-9-8-9c1-1.500 3-2 5-1.500z" fill="#ff4a52" />
    </svg>
  ),
  edge: (
    <svg width="24" height="24" viewBox="0 0 24 24">
      <path d="M2 11C3 5 7 1.500 12.500 1.500 19 1.500 22 6 22 11v3H9c0 4 3 5.500 6 5.500 2.500 0 4.500-.6 6-1.500v4c-2 1-4 1.500-7 1.500-6 0-9-4-9-9 0-3.500 1.500-6 4-7.500-3 .5-5.500 2-7 4zm7.500-1H16c0-3-1.200-4.500-3-4.500S9.700 7 9.500 10z" fill="#0a7be0" />
    </svg>
  ),
  xampp: (
    <svg width="24" height="24" viewBox="0 0 24 24">
      <rect width="24" height="24" rx="2" fill="#f37623" />
      <path d="M8 6c-4 0-4 4.500-1.500 6C4 13.500 4 18 8 18c2 0 2.500-2 4-2s2 2 4 2c4 0 4-4.500 1.500-6C20 10.500 20 6 16 6c-2 0-2.500 2-4 2s-2-2-4-2z" fill="none" stroke="#fff" strokeWidth="3" />
      <path d="M9.500 12h5" stroke="#fff" strokeWidth="2" />
    </svg>
  ),
  notepad: (
    <svg width="24" height="24" viewBox="0 0 24 24">
      <path d="M8 2l14 1-1 17-6 2z" fill="#ded8cc" />
      <path d="M8 2l11 1-4 19-14-3z" fill="#8fccd8" stroke="#4e8d9c" strokeWidth=".7" />
      <path d="M8 4l8 1-2 9-9-1z" fill="#bfe5eb" />
    </svg>
  ),
  photos: (
    <svg width="24" height="24" viewBox="0 0 24 24">
      <path d="M1.600 1.600h20.800v20.800H1.600z" fill="none" stroke="#fff" strokeWidth="1.300" />
      <path d="M2 18l7-9 5 6 3-3 5 5v5.500H2z" fill="#fff" />
    </svg>
  ),
  firefox: (
    <svg width="24" height="24" viewBox="0 0 24 24">
      <path d="M1 12c0-4 1-7 3-9l1 3c2-1 4-1 5-1 1-2 3-4 5-5 0 2 1 3 3 5 3 2 5 5 5 8.500C23 19 18 24 12 24S1 19 1 12z" fill="#ff5a2e" />
      <path d="M15 0c0 2 1 3 3 5 3 2 5 5 5 8.500 0 4-2 7-5 9 2-5 2-9-1-12-2-2-4-6-2-10.500z" fill="#ffd23d" />
      <circle cx="12" cy="13" r="5.500" fill="#7a3ddb" />
      <path d="M1 12c1 4 5 8 10 8s8-3 9-7c1 6-3 11-8 11S1 19 1 12z" fill="#ff3158" />
      <path d="M4 7c3-2 6-1 8 1-2 0-4 1-4 3z" fill="#ff9a2a" />
    </svg>
  ),
  monitor: (
    <svg width="24" height="24" viewBox="0 0 24 24">
      <path d="M2 7l5-2v13l-5-1z" fill="#b9bfc4" />
      <path d="M6 4l17 2-2 12-15-2z" fill="#f0f4f7" stroke="#9aa3aa" />
      <path d="M7 13l3-3 1 3 2-6 2 7 2-4 3 1" fill="none" stroke="#2a86c8" />
      <path d="M10 18l6 1 2 3-7 1-2-2z" fill="#d4d8dc" />
    </svg>
  ),
  texmaker: (
    <svg width="24" height="24" viewBox="0 0 24 24">
      <rect x="1.500" y="1.500" width="21" height="21" fill="#484848" stroke="#a7a7a7" strokeWidth="1.500" />
      <text x="3.500" y="12" fontFamily="Liberation Serif" fontSize="10" fill="#ddd" textLength="16">TEX</text>
      <text x="4.500" y="17" fontFamily="Liberation Sans" fontSize="4.500" fontWeight="bold" fill="#ddd" textLength="15">MAKER</text>
      <circle cx="18.500" cy="19.500" r="1.500" fill="#ddd" />
    </svg>
  ),
};

const TASKS = [
  ["explorer", true],
  ["opera", true],
  ["edge", false],
  ["xampp", false],
  ["notepad", false],
  ["photos", true],
  ["firefox", false],
  ["monitor", false],
  ["texmaker", true],
];

function Taskbar() {
  return (
    <div className="flex h-[46px] bg-[#082a1b] text-white">
      <svg width="173" height="46" viewBox="0 0 173 46" className="block shrink-0">
        <path d="M15 14.500l10-1.400V22H15zM26 13l13-2v11H26zM15 23h10v9l-10-1.400zM26 23h13v11l-13-2z" fill="#fff" />
        <circle cx="81" cy="23" r="10" fill="none" stroke="#fff" strokeWidth="3" />
        <g fill="none" stroke="#fff" strokeWidth="1.200">
          <path d="M123.500 11v3.500h15V11M123.500 34v-3.500h15V34M123.500 17.500h15v11h-15zM145.500 11v23" />
        </g>
        <rect x="144" y="18" width="3.500" height="4" fill="#fff" />
      </svg>
      <div className="flex gap-[14px]">
        {TASKS.map(([id, multi]) => (
          <div key={id} className="flex h-[46px] w-[43px] flex-col justify-between">
            <div className="mt-[11px] ml-[9px] h-6 w-6 shrink-0">{APPS[id]}</div>
            <div className="flex h-[3px]">
              <div className="grow bg-[#a6f0cb]" />
              {multi && <div className="w-[14px] border-l border-[#4e7f67] bg-[#84bea2]" />}
            </div>
          </div>
        ))}
      </div>
      <div className="ml-2 flex h-[46px] w-[48px] flex-col justify-between bg-[#088043]">
        <div className="mt-[11px] ml-[15px]"><ExcelIcon /></div>
        <div className="h-[3px] bg-[#a6f0cb]" />
      </div>
      <div className="flex h-[46px] w-[7px] flex-col justify-end border-l-2 border-[#0a4a2a] bg-[#0a6a39]">
        <div className="h-[3px] bg-[#84bea2]" />
      </div>
      <svg width="235" height="46" viewBox="1505 0 235 46" className="ml-auto block shrink-0" fill="none" stroke="#fff" strokeWidth="1.400">
        <path d="M1512 28l9-8.500 9 8.500" />
        <path d="M1550 33c0-10 7-18 17-18" strokeOpacity=".5" />
        <path d="M1554 33c0-7 5-13 13-13M1559 33c0-5 3-8 8-8" strokeOpacity=".85" />
        <path d="M1563.500 33c0-2 1-3.500 3.500-3.500" />
        <circle cx="1565.500" cy="31.500" r="1.200" fill="#fff" />
        <path d="M1588 17.500h15v13h-15.500V28M1604.500 21.500v5" />
        <path d="M1590 19.500h11.500v9H1590z" fill="#fff" />
        <path d="M1581.500 18.500h6v3c0 4-6 4-6 0zM1583 18v-4M1586.500 18v-4M1584.500 25v4h3" strokeWidth="1.200" fill="#082a1b" />
        <path d="M1618.500 20h3l5-5.500v17l-5-5.500h-3zM1630 20c1.500 2 1.500 4 0 6M1633 17.500c3 3 3 8 0 11" strokeWidth="1.300" />
        <path d="M1636 15c4 5 4 11 0 16" strokeOpacity=".4" />
        <path d="M1667 30l9-15c2-2 5 0 3.500 2.500l-8 13-5 2zM1667 24c-6 0-7 8-2 8 4 0 6-4 6-7M1675 25c4-3 7-2 5 1" strokeWidth="1.300" />
        <rect x="1703" y="14" width="31" height="18" />
        <path d="M1707 19h24M1707 23h24" strokeDasharray="1.500 1.500" />
        <path d="M1706 27.500h3M1711 27.500h14M1728 27.500h3" />
      </svg>
      <div className="ml-[19px] flex h-[46px] items-center text-[16px]">
        <T w={65}>8:30 PM</T>
      </div>
      <svg width="25" height="26" viewBox="0 0 25 26" className="mt-[11px] ml-[34px] block" fill="none" stroke="#fff" strokeWidth="1.300">
        <path d="M.7 .7h23v18h-8l-4 4.300-4-4.300h-7z" />
      </svg>
      <div className="ml-[29px] w-[8px] border-l border-[#6f8a7d]" />
    </div>
  );
}

export default function App() {
  return (
    <div className="flex h-[1080px] w-[1920px] flex-col overflow-hidden bg-[#dfe3ea] font-['Open_Sans',sans-serif]">
      <header className="relative h-[72px] border-b border-[#a8b3ad] bg-[linear-gradient(to_bottom,#00ce6c_0px,#00ce6c_26px,#35d68a_38px,#8be8bd_50px,#d3f6e4_62px,#eafbf3_71px)]">
        <div className="absolute top-0 right-0 h-[71px] w-[60px] bg-linear-to-l from-[#00ce6c] from-15% to-transparent" />
        <div className="relative">
          <TitleBar />
          <TabStrip />
        </div>
      </header>
      <Ribbon />
      <div className="h-1 border-t border-[#878d95] bg-[#d3d7dc]" />
      <FormulaBar />
      <div className="h-1 border-b border-[#7c838c] bg-[#dfe3f0]" />
      <div className="flex h-[765px]">
        <div>
          <Sheet />
          <SheetTabs />
        </div>
        <VScroll />
      </div>
      <StatusBar />
      <Taskbar />
    </div>
  );
}
